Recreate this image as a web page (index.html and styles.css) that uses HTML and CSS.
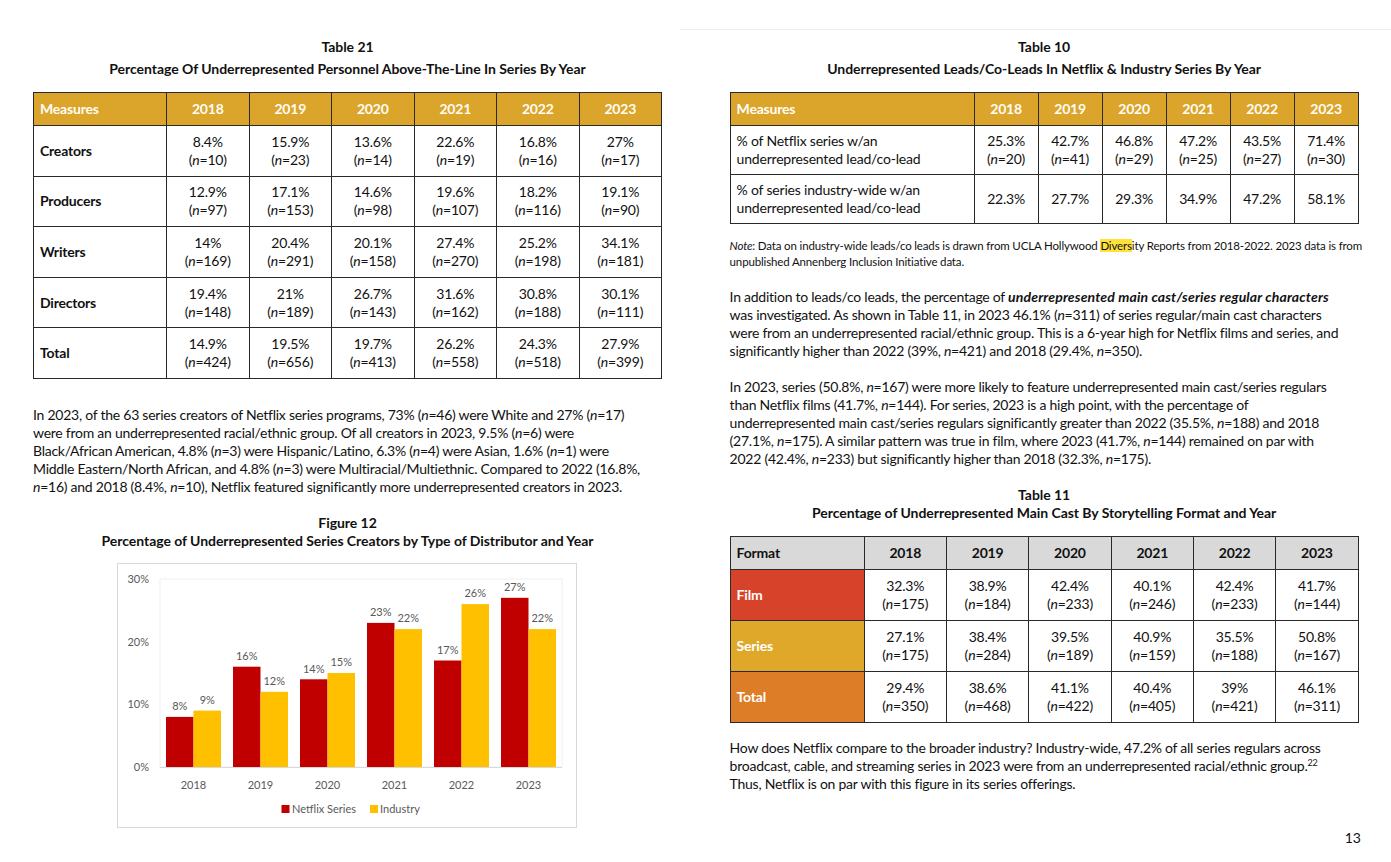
FILE: index.html
```html
<!DOCTYPE html>
<html lang="en">
<head>
<meta charset="utf-8">
<title>Netflix Inclusion Report – Page 13</title>
<link rel="stylesheet" href="styles.css">
</head>
<body>
<div class="spread">
  <section class="page page-left">
    <div class="caption">
      <div class="cap-num">Table 21</div>
      <div class="cap-title">Percentage Of Underrepresented Personnel Above-The-Line In Series By Year</div>
    </div>
    <table class="data t21">
      <colgroup><col class="c-label"><col><col><col><col><col><col></colgroup>
      <thead>
        <tr class="gold-head"><th class="lab">Measures</th><th>2018</th><th>2019</th><th>2020</th><th>2021</th><th>2022</th><th>2023</th></tr>
      </thead>
      <tbody>
        <tr><td class="lab b">Creators</td><td>8.4%<br>(<i>n</i>=10)</td><td>15.9%<br>(<i>n</i>=23)</td><td>13.6%<br>(<i>n</i>=14)</td><td>22.6%<br>(<i>n</i>=19)</td><td>16.8%<br>(<i>n</i>=16)</td><td>27%<br>(<i>n</i>=17)</td></tr>
        <tr><td class="lab b">Producers</td><td>12.9%<br>(<i>n</i>=97)</td><td>17.1%<br>(<i>n</i>=153)</td><td>14.6%<br>(<i>n</i>=98)</td><td>19.6%<br>(<i>n</i>=107)</td><td>18.2%<br>(<i>n</i>=116)</td><td>19.1%<br>(<i>n</i>=90)</td></tr>
        <tr><td class="lab b">Writers</td><td>14%<br>(<i>n</i>=169)</td><td>20.4%<br>(<i>n</i>=291)</td><td>20.1%<br>(<i>n</i>=158)</td><td>27.4%<br>(<i>n</i>=270)</td><td>25.2%<br>(<i>n</i>=198)</td><td>34.1%<br>(<i>n</i>=181)</td></tr>
        <tr><td class="lab b">Directors</td><td>19.4%<br>(<i>n</i>=148)</td><td>21%<br>(<i>n</i>=189)</td><td>26.7%<br>(<i>n</i>=143)</td><td>31.6%<br>(<i>n</i>=162)</td><td>30.8%<br>(<i>n</i>=188)</td><td>30.1%<br>(<i>n</i>=111)</td></tr>
        <tr><td class="lab b">Total</td><td>14.9%<br>(<i>n</i>=424)</td><td>19.5%<br>(<i>n</i>=656)</td><td>19.7%<br>(<i>n</i>=413)</td><td>26.2%<br>(<i>n</i>=558)</td><td>24.3%<br>(<i>n</i>=518)</td><td>27.9%<br>(<i>n</i>=399)</td></tr>
      </tbody>
    </table>

    <p class="para p-left">In 2023, of the 63 series creators of Netflix series programs, 73% (<i>n</i>=46) were White and 27% (<i>n</i>=17)<br>were from an underrepresented racial/ethnic group. Of all creators in 2023, 9.5% (<i>n</i>=6) were<br>Black/African American, 4.8% (<i>n</i>=3) were Hispanic/Latino, 6.3% (<i>n</i>=4) were Asian, 1.6% (<i>n</i>=1) were<br>Middle Eastern/North African, and 4.8% (<i>n</i>=3) were Multiracial/Multiethnic. Compared to 2022 (16.8%,<br><i>n</i>=16) and 2018 (8.4%, <i>n</i>=10), Netflix featured significantly more underrepresented creators in 2023.</p>

    <div class="caption cap-tight cap-fig">
      <div class="cap-num">Figure 12</div>
      <div class="cap-title">Percentage of Underrepresented Series Creators by Type of Distributor and Year</div>
    </div>

    <div class="chart">
      <svg class="chart-svg" width="458" height="263" viewBox="0 0 458 263">
        <rect x="42" y="15" width="402" height="188" fill="none" stroke="#f0f0f0" stroke-width="1"/>
        <line x1="42" y1="203.5" x2="444" y2="203.5" stroke="#d9d9d9" stroke-width="1"/>
        <g class="ylab">
          <text x="31" y="19">30%</text>
          <text x="31" y="81.7">20%</text>
          <text x="31" y="144.3">10%</text>
          <text x="31" y="207">0%</text>
        </g>
        <g fill="#c00000">
          <rect x="48" y="152.9" width="27.5" height="50.1"/>
          <rect x="115" y="102.7" width="27.5" height="100.3"/>
          <rect x="182" y="115.3" width="27.5" height="87.7"/>
          <rect x="249" y="58.9" width="27.5" height="144.1"/>
          <rect x="316" y="96.5" width="27.5" height="106.5"/>
          <rect x="383" y="33.8" width="27.5" height="169.2"/>
        </g>
        <g fill="#ffc000">
          <rect x="75.5" y="146.6" width="27.5" height="56.4"/>
          <rect x="142.5" y="127.8" width="27.5" height="75.2"/>
          <rect x="209.5" y="109" width="27.5" height="94"/>
          <rect x="276.5" y="65.1" width="27.5" height="137.9"/>
          <rect x="343.5" y="40.1" width="27.5" height="162.9"/>
          <rect x="410.5" y="65.1" width="27.5" height="137.9"/>
        </g>
        <g class="dlab">
          <text x="61.75" y="146">8%</text>
          <text x="128.75" y="96">16%</text>
          <text x="195.75" y="108.5">14%</text>
          <text x="262.75" y="52">23%</text>
          <text x="329.75" y="89.5">17%</text>
          <text x="396.75" y="27">27%</text>
          <text x="89.25" y="139.5">9%</text>
          <text x="156.25" y="121">12%</text>
          <text x="223.25" y="102">15%</text>
          <text x="290.25" y="58">22%</text>
          <text x="357.25" y="33">26%</text>
          <text x="424.25" y="58">22%</text>
        </g>
        <g class="xlab">
          <text x="75.5" y="225">2018</text>
          <text x="142.5" y="225">2019</text>
          <text x="209.5" y="225">2020</text>
          <text x="276.5" y="225">2021</text>
          <text x="343.5" y="225">2022</text>
          <text x="410.5" y="225">2023</text>
        </g>
        <rect x="163.5" y="241" width="8" height="8" fill="#c00000"/>
        <text class="leg" x="174" y="249">Netflix Series</text>
        <rect x="252" y="241" width="8" height="8" fill="#ffc000"/>
        <text class="leg" x="262" y="249">Industry</text>
      </svg>
    </div>
  </section>

  <section class="page page-right">
    <div class="caption">
      <div class="cap-num">Table 10</div>
      <div class="cap-title">Underrepresented Leads/Co-Leads In Netflix &amp; Industry Series By Year</div>
    </div>
    <table class="data t10">
      <colgroup><col class="c-label10"><col><col><col><col><col><col></colgroup>
      <thead>
        <tr class="gold-head"><th class="lab">Measures</th><th>2018</th><th>2019</th><th>2020</th><th>2021</th><th>2022</th><th>2023</th></tr>
      </thead>
      <tbody>
        <tr><td class="lab">% of Netflix series w/an<br>underrepresented lead/co-lead</td><td>25.3%<br>(<i>n</i>=20)</td><td>42.7%<br>(<i>n</i>=41)</td><td>46.8%<br>(<i>n</i>=29)</td><td>47.2%<br>(<i>n</i>=25)</td><td>43.5%<br>(<i>n</i>=27)</td><td>71.4%<br>(<i>n</i>=30)</td></tr>
        <tr><td class="lab">% of series industry-wide w/an<br>underrepresented lead/co-lead</td><td>22.3%</td><td>27.7%</td><td>29.3%</td><td>34.9%</td><td>47.2%</td><td>58.1%</td></tr>
      </tbody>
    </table>

    <p class="note"><i>Note</i>: Data on industry-wide leads/co leads is drawn from UCLA Hollywood <span class="hl">Divers</span>ity Reports from 2018-2022. 2023 data is from<br>unpublished Annenberg Inclusion Initiative data.</p>

    <p class="para p-r1">In addition to leads/co leads, the percentage of <b><i>underrepresented main cast/series regular characters</i></b><br>was investigated. As shown in Table 11, in 2023 46.1% (<i>n</i>=311) of series regular/main cast characters<br>were from an underrepresented racial/ethnic group. This is a 6-year high for Netflix films and series, and<br>significantly higher than 2022 (39%, <i>n</i>=421) and 2018 (29.4%, <i>n</i>=350).</p>

    <p class="para p-r2">In 2023, series (50.8%, <i>n</i>=167) were more likely to feature underrepresented main cast/series regulars<br>than Netflix films (41.7%, <i>n</i>=144). For series, 2023 is a high point, with the percentage of<br>underrepresented main cast/series regulars significantly greater than 2022 (35.5%, <i>n</i>=188) and 2018<br>(27.1%, <i>n</i>=175). A similar pattern was true in film, where 2023 (41.7%, <i>n</i>=144) remained on par with<br>2022 (42.4%, <i>n</i>=233) but significantly higher than 2018 (32.3%, <i>n</i>=175).</p>

    <div class="caption cap-tight cap-t11">
      <div class="cap-num">Table 11</div>
      <div class="cap-title">Percentage of Underrepresented Main Cast By Storytelling Format and Year</div>
    </div>
    <table class="data t11">
      <colgroup><col class="c-label11"><col><col><col><col><col><col></colgroup>
      <thead>
        <tr class="gray-head"><th class="lab">Format</th><th>2018</th><th>2019</th><th>2020</th><th>2021</th><th>2022</th><th>2023</th></tr>
      </thead>
      <tbody>
        <tr><td class="lab fmt film">Film</td><td>32.3%<br>(<i>n</i>=175)</td><td>38.9%<br>(<i>n</i>=184)</td><td>42.4%<br>(<i>n</i>=233)</td><td>40.1%<br>(<i>n</i>=246)</td><td>42.4%<br>(<i>n</i>=233)</td><td>41.7%<br>(<i>n</i>=144)</td></tr>
        <tr><td class="lab fmt series">Series</td><td>27.1%<br>(<i>n</i>=175)</td><td>38.4%<br>(<i>n</i>=284)</td><td>39.5%<br>(<i>n</i>=189)</td><td>40.9%<br>(<i>n</i>=159)</td><td>35.5%<br>(<i>n</i>=188)</td><td>50.8%<br>(<i>n</i>=167)</td></tr>
        <tr><td class="lab fmt total">Total</td><td>29.4%<br>(<i>n</i>=350)</td><td>38.6%<br>(<i>n</i>=468)</td><td>41.1%<br>(<i>n</i>=422)</td><td>40.4%<br>(<i>n</i>=405)</td><td>39%<br>(<i>n</i>=421)</td><td>46.1%<br>(<i>n</i>=311)</td></tr>
      </tbody>
    </table>

    <p class="para p-r3">How does Netflix compare to the broader industry? Industry-wide, 47.2% of all series regulars across<br>broadcast, cable, and streaming series in 2023 were from an underrepresented racial/ethnic group.<sup>22</sup><br>Thus, Netflix is on par with this figure in its series offerings.</p>

    <div class="page-num">13</div>
  </section>
</div>
</body>
</html>
```

FILE: styles.css
```css
html, body {
  margin: 0;
  padding: 0;
  background: #ffffff;
}

body {
  font-family: "Lato", "Open Sans", "Liberation Sans", sans-serif;
  color: #111111;
  font-size: 14px;
  width: 1391px;
  height: 862px;
  overflow: hidden;
}

.spread {
  display: flex;
  align-items: flex-start;
}

.page {
  box-sizing: border-box;
}

.page-left {
  width: 683px;
  padding: 36px 0 0 33px;
}

.page-right {
  flex: 1;
  margin-top: 29px;
  border-top: 1px solid #f0f0f0;
  padding: 6px 29px 0 50px;
}

/* captions */
.caption {
  width: 629px;
  text-align: center;
  font-weight: 700;
  font-size: 14px;
  line-height: 22px;
  letter-spacing: -0.05px;
}

.cap-tight {
  line-height: 18px;
}

.cap-fig {
  margin-top: 18px;
}

.cap-t11 {
  margin-top: 18px;
}

/* tables */
.data {
  width: 629px;
  border-collapse: collapse;
  table-layout: fixed;
  margin-top: 12px;
  font-size: 14px;
  letter-spacing: -0.2px;
}

.data th,
.data td {
  border: 1.5px solid #2a2a2a;
  text-align: center;
  vertical-align: middle;
  padding: 0;
  line-height: 18px;
}

.data th {
  font-weight: 700;
}

.data .lab {
  text-align: left;
  padding-left: 6px;
}

.data .b {
  font-weight: 700;
}

.c-label { width: 133px; }
.c-label10 { width: 244px; }
.c-label11 { width: 134px; }

.gold-head th {
  background: #dba42b;
  color: #fffdf5;
  height: 32px;
}

.gray-head th {
  background: #d9d9d9;
  color: #111111;
  height: 32px;
}

.t21 tbody td {
  height: 49.6px;
}

.t10 tbody td {
  height: 48px;
}

.t11 {
  margin-top: 14px;
}

.t11 tbody td {
  height: 50px;
}

.fmt {
  color: #ffffff;
  font-weight: 700;
}

.film { background: #d7432a; }
.series { background: #dfa82b; }
.total { background: #de7d27; }

/* text */
.para {
  margin: 0;
  font-size: 14px;
  line-height: 18px;
  white-space: nowrap;
  letter-spacing: -0.25px;
}

.p-left { margin-top: 27px; }
.p-r1 { margin-top: 18px; }
.p-r2 { margin-top: 18px; }
.p-r3 { margin-top: 16px; }

.p-r1 b i {
  letter-spacing: 0.15px;
}

.note {
  margin: 14px 0 0 0;
  font-size: 11.5px;
  line-height: 16px;
  white-space: nowrap;
  letter-spacing: -0.15px;
}

.hl {
  background: #ffe33a;
}

sup {
  font-size: 9px;
  line-height: 0;
  vertical-align: 5px;
}

/* chart */
.chart {
  margin: 13px 0 0 84px;
  width: 458px;
  height: 263px;
  border: 1px solid #d9d9d9;
}

.chart-svg {
  display: block;
  font-family: "Lato", "Open Sans", sans-serif;
}

.ylab text {
  font-size: 11px;
  fill: #595959;
  text-anchor: end;
}

.dlab text,
.xlab text {
  font-size: 11px;
  fill: #595959;
  text-anchor: middle;
}

.leg {
  font-size: 11px;
  fill: #595959;
}

.page-num {
  margin-top: 36px;
  text-align: right;
  font-size: 14px;
  padding-right: 1px;
}
```
